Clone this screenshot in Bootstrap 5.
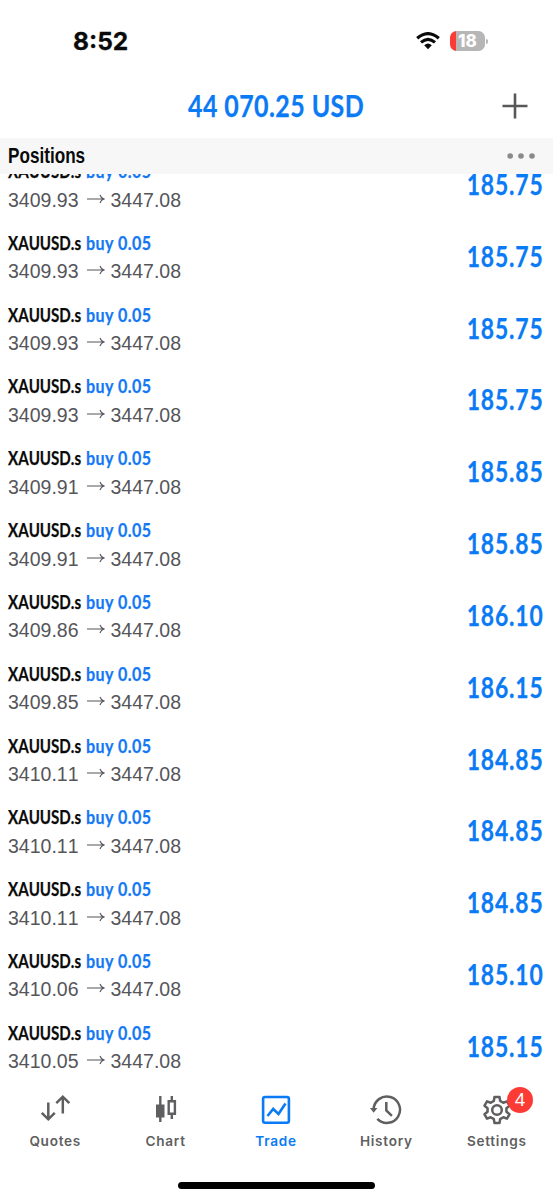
<!DOCTYPE html>
<html lang="en">
<head>
<meta charset="utf-8">
<meta name="viewport" content="width=device-width, initial-scale=1">
<title>Trade</title>
<link href="https://cdn.jsdelivr.net/npm/bootstrap@5.3.0/dist/css/bootstrap.min.css" rel="stylesheet">
<style>
  body { height: 1200px; overflow: hidden; background: #fff; color: #0a0a0a; font-family: "Liberation Sans", sans-serif; font-kerning: none; }
  .blue { color: #0a7af5; }
  .statusbar { height: 82px; padding: 0 65px 0 73px; }
  .clock { font: 700 24.5px/1 Inter, sans-serif; -webkit-text-stroke: .3px currentColor; }
  .battery { width: 35px; height: 20px; margin-left: 2px; border-radius: 6.5px; background: linear-gradient(90deg, #fb3c35 6.5px, #b6b6b6 6.5px); color: #fff; font: 800 17px/20px Inter, sans-serif; }
  .batt-tip { width: 2px; height: 5px; border-radius: 0 2px 2px 0; background: #b6b6b6; margin-left: 1px; }
  .balance-bar { height: 56px; }
  .squeeze { display: inline-block; white-space: nowrap; font-family: Lato, sans-serif; font-weight: 700; -webkit-text-stroke: .25px currentColor; }
  .balance { font-size: 29.8px; line-height: 47px; transform: scaleX(.838); letter-spacing: .5px; }
  .plus-btn { right: 25px; top: 11px; }
  .section-head { height: 36px; background: #f7f7f7; padding: 0 17px 0 8px; }
  .section-title { font: 700 21.3px/37px "Liberation Sans", sans-serif; transform: scaleX(.805); transform-origin: 0 50%; }
  .positions { height: 905px; overflow: hidden; }
  .position-list { margin-top: -17px; }
  .position { height: 71.82px; padding: 0 9px 15.82px 8px; }
  .deal { height: 28px; }
  .sym, .side { font-size: 19.5px; line-height: 28px; transform-origin: 0 50%; }
  .sym-box { width: 78px; }
  .sym { transform: scaleX(.775); }
  .side { transform: scaleX(.825); letter-spacing: .45px; color: #1478f5; }
  .prices { height: 28px; font-size: 19.5px; line-height: 30px; color: #55555a; padding-top: 1px; }
  .prices svg { margin-right: 6px; }
  .amount { font-size: 27.6px; line-height: 55px; transform: scaleX(.83); transform-origin: 100% 50%; letter-spacing: 1px; }
  .tabs { height: 80px; color: #5f5f61; }
  .tab-item { width: 110.4px; padding-top: 15px; }
  .tab-label { font: 600 13.6px/18px Inter, sans-serif; letter-spacing: .72px; margin-top: 6px; }
  .count { left: 65.5px; top: 8px; width: 26px; height: 26px; background: #fb3b34; color: #fff; font-size: 19px; line-height: 26px; }
  .home-bar { width: 197px; height: 7px; background: #000; margin-top: 23px; }
</style>
</head>
<body>
<header>
  <div class="statusbar d-flex align-items-center justify-content-between">
    <span class="clock">8:52</span>
    <div class="d-flex align-items-center">
      <svg width="24" height="18" viewBox="0 0 24 18" fill="none" stroke="#0a0a0a" stroke-width="3.2" class="me-2"><path d="M1.2 6.3Q12-3 22.8 6.3M5 10.4Q12 4.2 19 10.4"/><path d="M8.2 13.2Q12 9.8 15.8 13.2L12 17.2Z" fill="#0a0a0a" stroke="none"/></svg>
      <div class="battery text-center">18</div><div class="batt-tip"></div>
    </div>
  </div>
  <div class="balance-bar position-relative text-center">
    <span class="squeeze balance blue">44 070.25 USD</span>
    <svg class="plus-btn position-absolute" width="26" height="26" viewBox="0 0 26 26" stroke="#58585a" stroke-width="2.6"><path d="M0.5 13H25.5M13 .5V25.5"/></svg>
  </div>
  <div class="section-head d-flex align-items-center justify-content-between">
    <span class="section-title">Positions</span>
    <svg width="29" height="8" viewBox="0 0 29 8" fill="#8a8a8c"><circle cx="3.2" cy="4" r="2.8"/><circle cx="14" cy="4" r="2.8"/><circle cx="25" cy="4" r="2.8"/></svg>
  </div>
</header>
<main class="positions"><div class="position-list" id="list"></div></main>
<nav class="tabs d-flex">
  <div class="tab-item text-center"><svg width="32" height="32" viewBox="0 0 32 32" fill="none" stroke="currentColor" stroke-width="2.5"><path d="M9.3 8.5V25.5M2.8 18.8L9.3 25.3L15.8 18.8M23.8 19.5V3M17.3 9.2L23.8 2.7L30.3 9.2"/></svg><div class="tab-label">Quotes</div></div>
  <div class="tab-item text-center"><svg width="32" height="32" viewBox="0 0 32 32" fill="none" stroke="currentColor" stroke-width="2.4"><path d="M10.3 2V28M21.8 2V7M21.8 20V25"/><path d="M6 10.5H14.5V23.5H6Z" fill="currentColor" stroke="none"/><path d="M18.7 7.2H24.9V19.8H18.7Z"/></svg><div class="tab-label">Chart</div></div>
  <div class="tab-item text-center blue"><svg width="32" height="32" viewBox="0 0 32 32" fill="none" stroke="currentColor" stroke-width="2.6"><rect x="3.1" y="3" width="25.8" height="25.8" rx="2"/><path d="M7.5 22L13.2 15L18.5 20L25.5 9.5"/></svg><div class="tab-label">Trade</div></div>
  <div class="tab-item text-center"><svg width="32" height="32" viewBox="0 0 32 32" fill="none" stroke="currentColor" stroke-width="2.5"><path d="M3.6 15.5A13.2 13.2 0 1 1 7.3 24.9M16.3 8V16.5L21.9 21.9"/><path d="M0 14H7.4L3.7 18.7Z" fill="currentColor" stroke="none"/></svg><div class="tab-label">History</div></div>
  <div class="tab-item text-center position-relative"><svg width="32" height="32" viewBox="0 0 32 32" fill="none" stroke="currentColor" stroke-width="2.5" stroke-linejoin="round"><path id="gear"/><circle cx="16" cy="16" r="4.8"/></svg><span class="count position-absolute rounded-circle text-center">4</span><div class="tab-label">Settings</div></div>
</nav>
<div class="home-bar rounded-pill mx-auto"></div>
<script src="https://cdn.jsdelivr.net/npm/bootstrap@5.3.0/dist/js/bootstrap.bundle.min.js"></script>
<script>
  const deals = [["3409.93","185.75"],["3409.93","185.75"],["3409.93","185.75"],["3409.93","185.75"],["3409.91","185.85"],["3409.91","185.85"],["3409.86","186.10"],["3409.85","186.15"],["3410.11","184.85"],["3410.11","184.85"],["3410.11","184.85"],["3410.06","185.10"],["3410.05","185.15"]];
  document.getElementById("list").innerHTML = deals.map(([open, profit]) => `
    <div class="position d-flex justify-content-between">
      <div>
        <div class="deal d-flex"><span class="sym-box"><span class="squeeze sym">XAUUSD.s</span></span><span class="squeeze side">buy 0.05</span></div>
        <div class="prices d-flex align-items-center"><span>${open}</span><svg class="ms-2" width="18" height="12" viewBox="0 0 18 12" fill="none" stroke="#55555a" stroke-width="1.1"><path d="M0 5H17M13 1Q14 4.2 17 5Q14 5.8 13 9"/></svg><span>3447.08</span></div>
      </div>
      <span class="squeeze amount blue">${profit}</span>
    </div>`).join("");
  // Gear outline: six teeth around the centre
  const pts = [];
  for (let i = 0; i < 6; i++) {
    for (const [r, a] of [[9.6,-19],[13.2,-11],[13.2,11],[9.6,19]]) {
      const t = (i * 60 - 90 + a) * Math.PI / 180;
      pts.push((16 + r * Math.cos(t)).toFixed(2) + " " + (16 + r * Math.sin(t)).toFixed(2));
    }
  }
  document.getElementById("gear").setAttribute("d", "M" + pts.join("L") + "Z");
</script>
</body>
</html>
